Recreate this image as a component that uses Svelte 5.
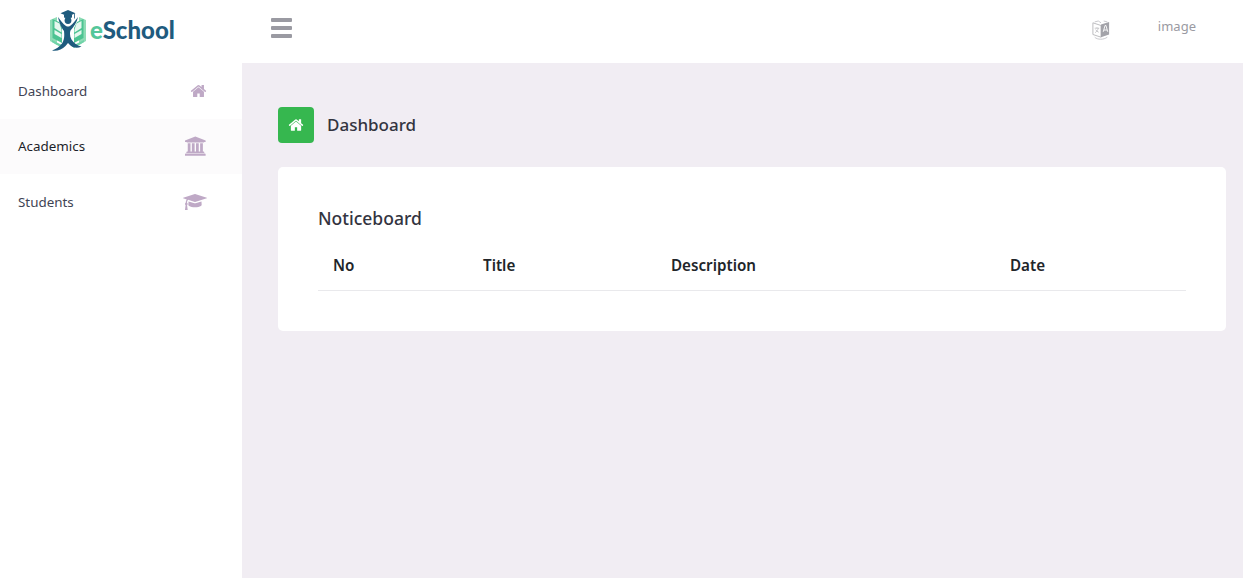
<script>
  const menu = [
    { label: 'Dashboard', icon: 'home', w: 17, box: '0 0 1792 1792', active: false },
    { label: 'Academics', icon: 'bank', w: 22, box: '0 0 2048 1792', active: true },
    { label: 'Students', icon: 'cap', w: 24, box: '0 0 2304 1792', active: false }
  ];
  const columns = ['No', 'Title', 'Description', 'Date'];

  const paths = {
    home: 'M1472 992v480q0 26-19 45t-45 19h-384v-384H768v384H384q-26 0-45-19t-19-45V992q0-1 .5-3t.5-3l575-474 575 474q1 2 1 6zm223-69l-62 74q-8 9-21 11h-3q-13 0-21-7L896 424 204 1001q-12 8-24 7-13-2-21-11l-62-74q-8-10-7-23.500t11-21.500l719-599q32-26 76-26t76 26l244 204V288q0-14 9-23t23-9h192q14 0 23 9t9 23v408l219 182q10 8 11 21.500t-7 23.500z',
    bank: 'M960 0l960 384v128h-128q0 26-20.500 45t-48.500 19H208q-28 0-48.500-19T139 512H0V384zM256 640h256v768h128V640h256v768h128V640h256v768h128V640h256v768h59q28 0 48.500 19t20.500 45v64H128v-64q0-26 20.500-45t48.500-19h59V640zm1595 960q28 0 48.500 19t20.500 45v128H0v-128q0-26 20.500-45t48.500-19h1782z',
    cap: 'M1774 836l18 316q4 69-82 128t-235 93.500-323 34.500-323-34.500-235-93.500-82-128l18-316 574 181q22 7 48 7t48-7zm530-324q0 23-22 31L1162 895q-4 1-10 1t-10-1L490 689q-43 34-71 111.500T385 979q63 36 63 109 0 69-58 107l58 433q2 14-8 25-9 11-24 11H224q-15 0-24-11-10-11-8-25l58-433q-58-38-58-107 0-73 65-111 11-207 98-330L22 543q-22-8-22-31t22-31L1142 129q4-1 10-1t10 1l1120 352q22 8 22 31z'
  };
</script>

<div class="layout">
  <header class="topbar">
    <div class="brand">
      <svg class="logo-mark" viewBox="0 0 36 41" width="36" height="41">
        <!-- open book: outer covers, then pages with leaf shapes -->
        <path d="M0 10l7-3v28l-7-4zM36 10l-7-3v28l7-4z" fill="#8fdcb6" />
        <path d="M2.500 9l6.500 3 3 6v15l-9.500-5zM33.500 9L27 12l-3 6v15l9.500-5z" fill="#4cc392" />
        <path d="M4.500 11l5 2.500 2 6v3L4.500 18zM31.500 11l-5 2.500-2 6v3l7-4.500z" fill="#e6f7ef" />
        <path d="M4.500 20l7 4v4l-7-4zM31.500 20l-7 4v4l7-4z" fill="#e6f7ef" />
        <path d="M2 32l10 6 2-2-12-6zM34 32l-10 6-2-2 12-6z" fill="#6fd3a8" />
        <!-- reader figure with raised arms -->
        <path d="M8 7c2.500 3 5 7 8 9 1.500.8 2.500.8 4 0 3-2 5.500-6 8-9-1 5-4 10-7.500 13.500-1 3-.5 6 1 9 2 3 5 6 10 7-4 2-8 1.500-11-1l-2.500-2.500L15.500 36C12 39.500 7 41.500 2 40.500c4-1.500 7.500-3.500 10-7 2.500-4 2.500-8 2-12.500C11.500 18 9 12.500 8 7z" fill="#1f5b7e" />
        <circle cx="18" cy="10.500" r="3.400" fill="#1f5b7e" />
        <path d="M18 0l7.500 3.200L18 6.400l-7.500-3.200z" fill="#1f5b7e" />
        <path d="M14 5h8v2.500c-2 1-6 1-8 0z" fill="#1f5b7e" />
        <path d="M24.500 3.500v5" stroke="#1f5b7e" stroke-width=".8" fill="none" />
      </svg>
      <span class="wordmark"><span class="e">e</span>School</span>
    </div>
    <div class="bars" aria-hidden="true"><i></i><i></i><i></i></div>
    <div class="top-right">
      <svg class="lang" viewBox="0 0 20 22" width="18" height="20">
        <path d="M1 3l9 3v13l-9-3z" fill="#fff" stroke="#b5b5b9" stroke-width="1" />
        <path d="M10 5l9-3v14l-9 3z" fill="#a3a3a9" />
        <path d="M3 2l4-1 3 2M13 1l4 1" stroke="#c4c4c8" fill="none" />
        <path d="M3 19c3 3 10 3 14 0" stroke="#c4c4c8" fill="none" />
        <path d="M12.500 13l2-7h1l2 7M13.300 11h3.300" stroke="#fff" stroke-width="1" fill="none" />
        <path d="M3 9h5M5.500 8v1M7 9c-.5 2-2 4-3.500 5M4 10.500c1 1.500 2 2.500 3.500 3" stroke="#b5b5b9" stroke-width=".8" fill="none" />
      </svg>
      <span class="user">image</span>
    </div>
  </header>

  <div class="body">
    <nav class="sidebar">
      {#each menu as item}
        <div class="nav-item" class:active={item.active}>
          <span>{item.label}</span>
          <svg class="nav-icon" viewBox={item.box} width={item.w} height="20"><path d={paths[item.icon]} /></svg>
        </div>
      {/each}
    </nav>

    <main class="content">
      <div class="page-title">
        <span class="title-icon">
          <svg viewBox="0 0 1792 1792" width="16" height="16"><path d={paths.home} /></svg>
        </span>
        <h1>Dashboard</h1>
      </div>

      <section class="card">
        <h2>Noticeboard</h2>
        <div class="table-head">
          {#each columns as col}
            <div>{col}</div>
          {/each}
        </div>
      </section>
    </main>
  </div>
</div>

<style>
  :global(body) {
    margin: 0;
    overflow: hidden;
    font-family: "Noto Sans", "Open Sans", sans-serif;
  }

  .layout {
    display: flex;
    flex-direction: column;
    height: 100vh;
    background: #fff;
  }

  .topbar {
    display: flex;
    align-items: center;
    height: 63px;
    flex-shrink: 0;
  }

  .brand {
    display: flex;
    align-items: center;
    width: 271px;
    padding-left: 50px;
    box-sizing: border-box;
    gap: 4px;
  }

  .logo-mark {
    margin-top: -3px;
  }

  .wordmark {
    font-family: "Lato", sans-serif;
    font-weight: 900;
    font-size: 24px;
    color: #1f5b7e;
    margin-top: -5px;
  }

  .e {
    color: #55c79a;
  }

  .bars {
    display: flex;
    flex-direction: column;
    gap: 4px;
    width: 21px;
    margin-top: -7px;
  }

  .bars i {
    display: block;
    height: 4px;
    background: #9a9aa2;
    border-radius: 1px;
  }

  .top-right {
    display: flex;
    align-items: center;
    margin-left: auto;
    margin-top: -6px;
    padding-right: 47px;
  }

  .lang {
    margin-right: 48px;
    margin-top: 2px;
  }

  .user {
    font-size: 13px;
    color: #9a9aa2;
    margin-top: -5px;
  }

  .body {
    display: flex;
    flex: 1;
    min-height: 0;
  }

  .sidebar {
    width: 242px;
    flex-shrink: 0;
  }

  .nav-item {
    display: flex;
    align-items: center;
    justify-content: space-between;
    height: 55.500px;
    padding: 0 35px 0 18px;
    font-size: 13.400px;
    color: #3f4454;
  }

  .nav-item.active {
    background: #fcfbfc;
    color: #1c1f2a;
  }

  .nav-icon {
    fill: #bfa9c6;
  }

  .content {
    flex: 1;
    background: #f1edf3;
    padding: 44px 17px 0 36px;
  }

  .page-title {
    display: flex;
    align-items: center;
    gap: 13px;
    height: 36px;
  }

  .title-icon {
    display: flex;
    align-items: center;
    justify-content: center;
    width: 36px;
    height: 36px;
    background: #36b74f;
    border-radius: 4px;
  }

  .title-icon svg {
    fill: #fff;
  }

  h1 {
    margin: -2px 0 0;
    font-size: 17px;
    font-weight: 500;
    color: #33343f;
  }

  .card {
    margin-top: 24px;
    height: 164px;
    box-sizing: border-box;
    padding: 40px;
    background: #fff;
    border-radius: 5px;
  }

  h2 {
    margin: 0;
    height: 24px;
    line-height: 22px;
    font-size: 17.500px;
    font-weight: 500;
    color: #33343f;
  }

  .table-head {
    display: grid;
    grid-template-columns: 150px 188px 339px 1fr;
    margin-top: 8px;
    padding: 0 15px;
    height: 51px;
    align-items: center;
    border-bottom: 1px solid #e9e9ec;
    font-size: 15.200px;
    font-weight: 600;
    color: #212529;
  }
</style>
